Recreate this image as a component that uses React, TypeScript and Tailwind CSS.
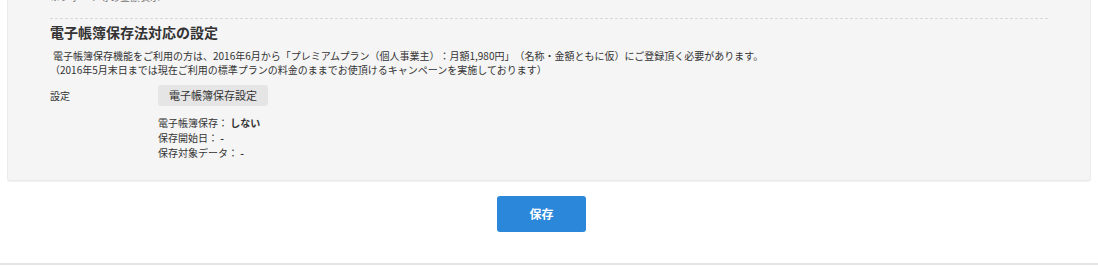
const infoRows = [
  { label: '電子帳簿保存：', value: 'しない' },
  { label: '保存開始日：', value: '-' },
  { label: '保存対象データ：', value: '-' },
];

export default function App() {
  return (
    <div
      className="h-[266px] w-full overflow-hidden bg-white text-[#333] [text-spacing-trim:space-all]"
      style={{ fontFamily: '"Noto Sans CJK JP", "Noto Sans", sans-serif' }}
    >
      {/* settings panel (top is scrolled out of view) */}
      <div className="mx-[7px] -mt-[20px] rounded-b-[3px] border border-[#ebebeb] bg-[#f5f5f5] px-[42px] pt-[9px] pb-[20px] shadow-[0_1px_1px_rgba(0,0,0,0.06)]">
        <p className="text-[10px] leading-[14px] text-[#777]">※レポート等の金額表示</p>

        <div className="mt-[14px] border-t border-dashed border-[#d9d9d9]" />

        <h2 className="mt-[3px] text-[14px] leading-[20px] font-bold">電子帳簿保存法対応の設定</h2>

        <div className="mt-[7px] text-[10px] leading-[14px]">
          <p className="pl-[3px]">
            電子帳簿保存機能をご利用の方は、2016年6月から「プレミアムプラン（個人事業主）：月額1,980円」（名称・金額ともに仮）にご登録頂く必要があります。
          </p>
          <p>（2016年5月末日までは現在ご利用の標準プランの料金のままでお使頂けるキャンペーンを実施しております）</p>
        </div>

        <div className="mt-[8px] flex">
          <div className="flex h-[21px] w-[108px] shrink-0 items-center text-[10px]">設定</div>
          <div className="flex flex-col items-start">
            <button className="block h-[21px] rounded-[3px] bg-[#e5e5e5] px-[11px] text-[11px] leading-[21px] text-[#333]">
              電子帳簿保存設定
            </button>
            <div className="mt-[9px] text-[10px] leading-[15px]">
              {infoRows.map((row) => (
                <div key={row.label}>
                  {row.label} <span className="font-bold">{row.value}</span>
                </div>
              ))}
            </div>
          </div>
        </div>
      </div>

      {/* save */}
      <div className="mt-[15px] flex justify-center pr-[15px]">
        <button className="h-[36px] w-[89px] rounded-[3px] bg-[#2b87da] text-[12px] font-bold text-white">保存</button>
      </div>

      <div className="mt-[31px] border-t-2 border-[#e6e6e6]" />
    </div>
  );
}
